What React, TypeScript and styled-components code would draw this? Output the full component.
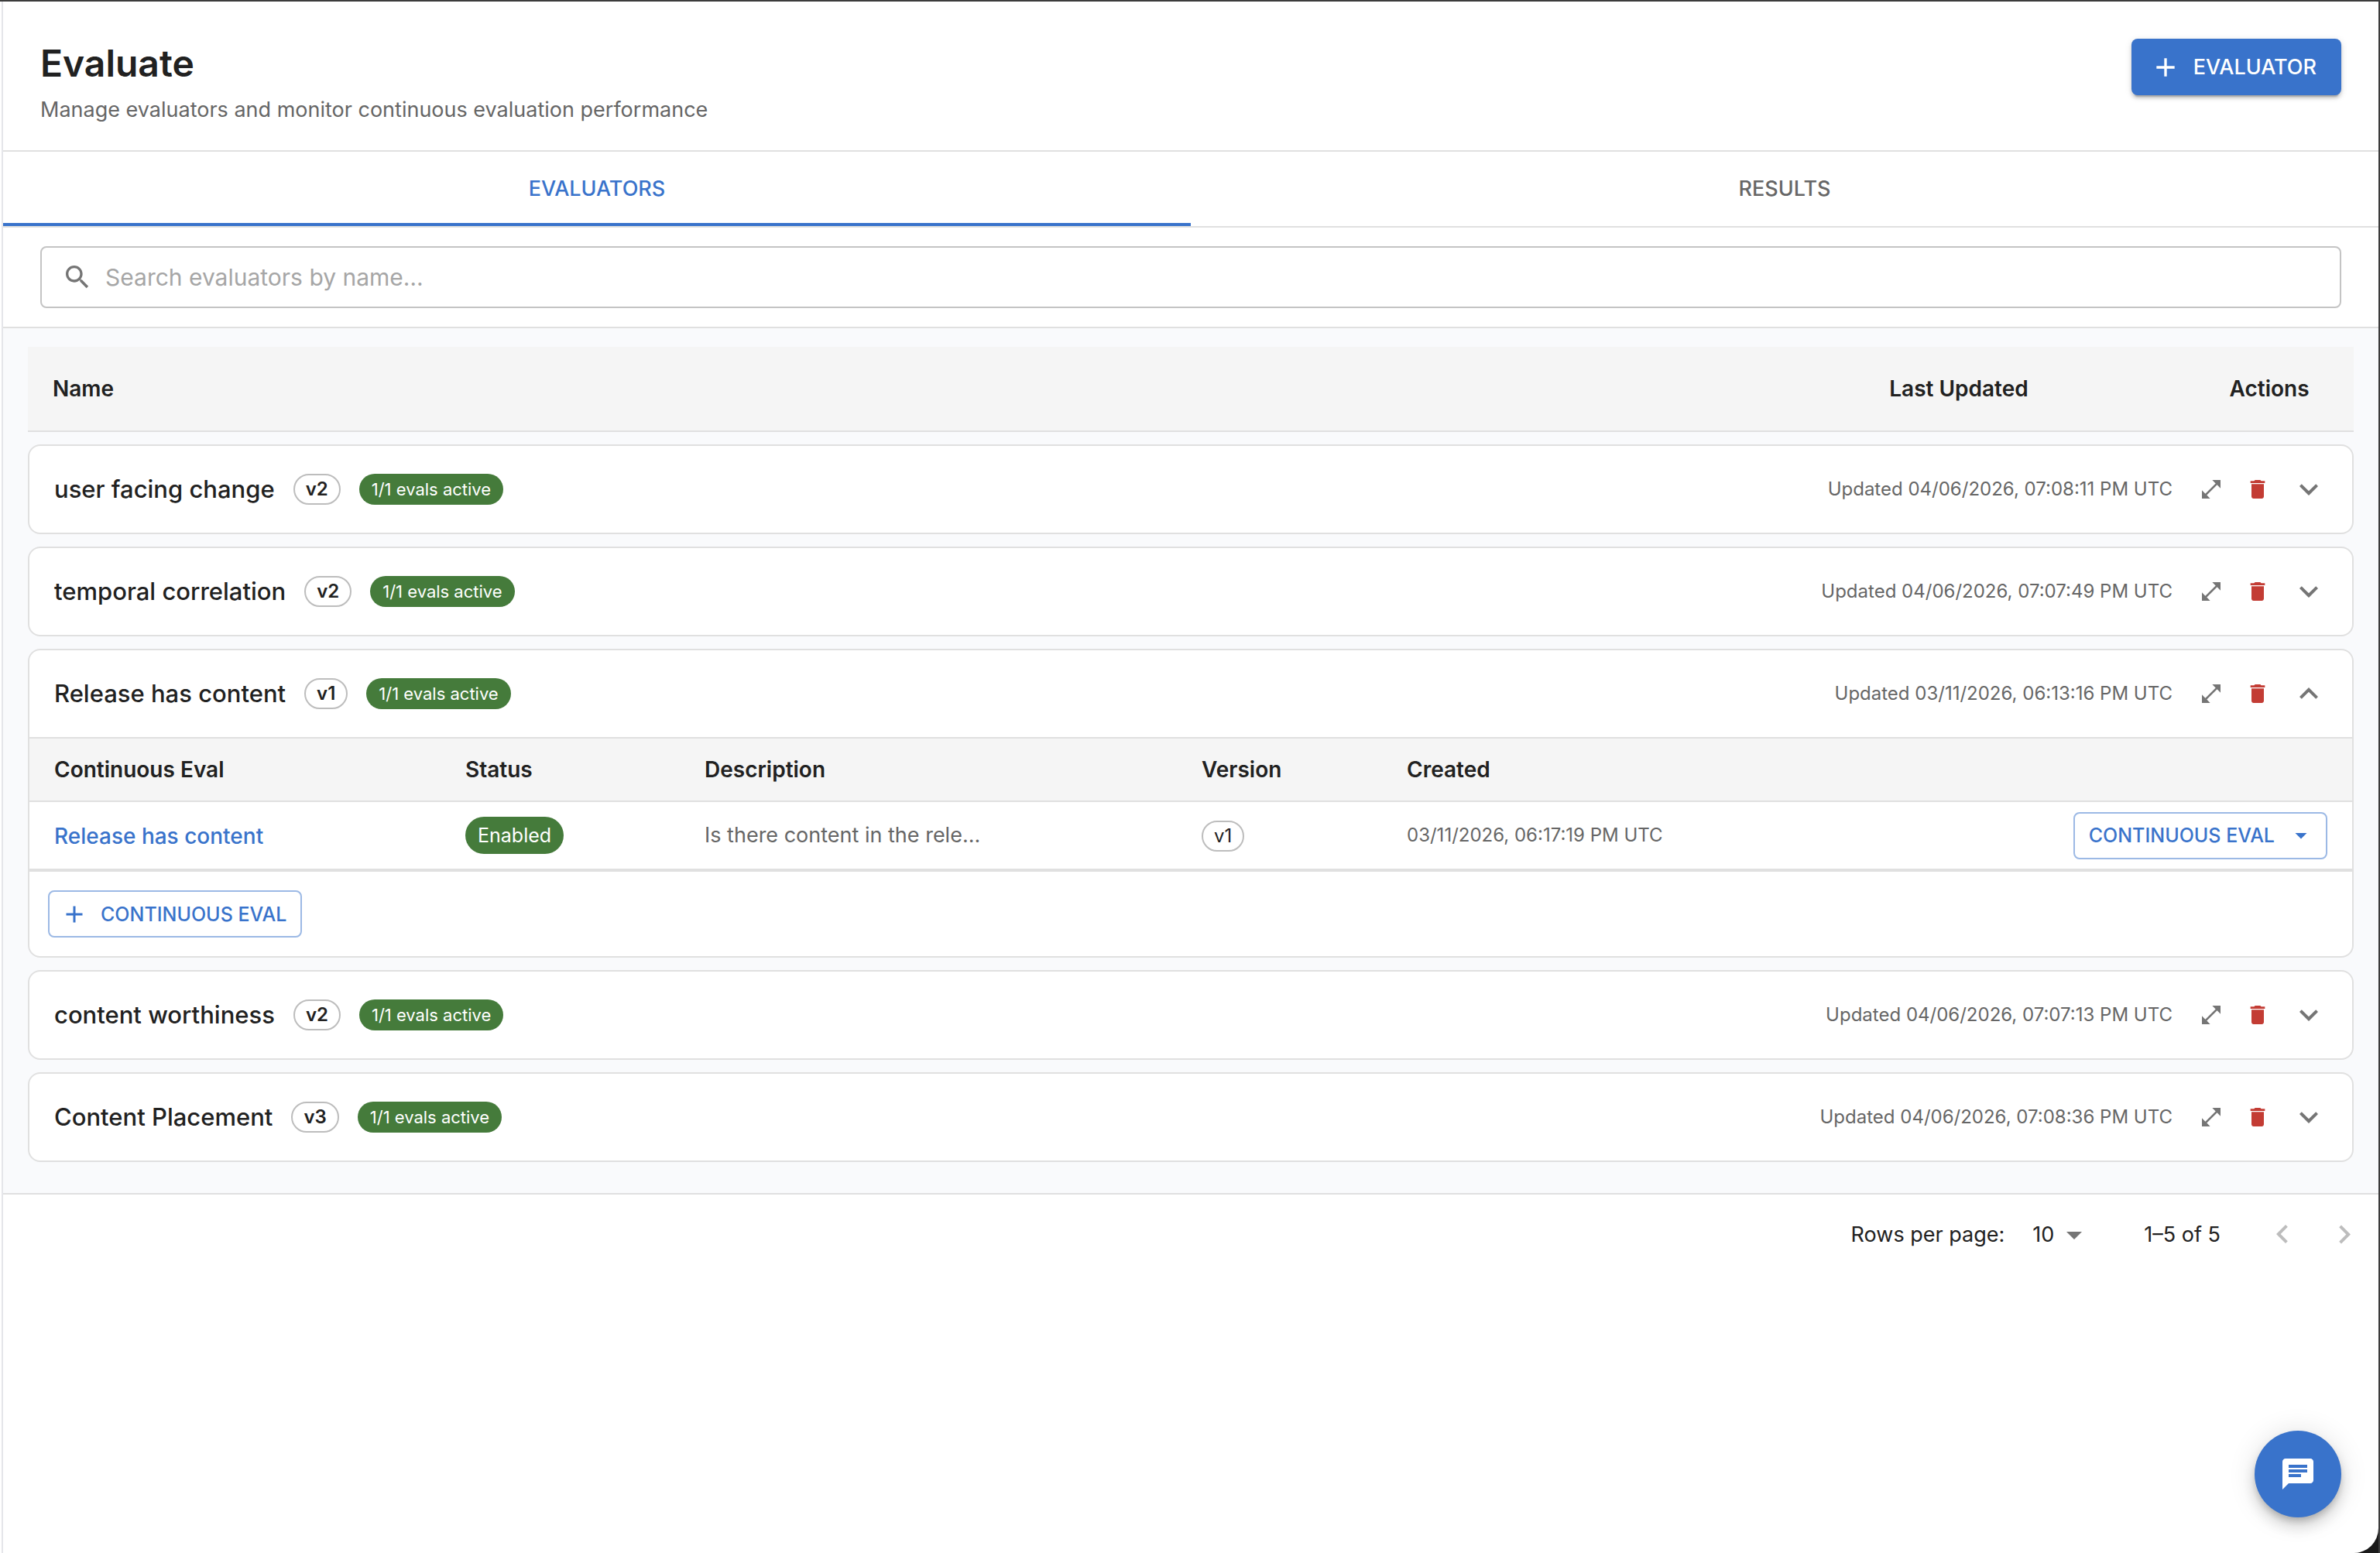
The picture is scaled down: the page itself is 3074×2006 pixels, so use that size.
import React, { useState } from "react";
import styled, { createGlobalStyle, css } from "styled-components";

const color = {
  primary: "#3973cb",
  primaryEdge: "#9cb9e5",
  success: "#457b3b",
  danger: "#c33c34",
  ink: "#212121",
  muted: "#666666",
  icon: "#757575",
  disabled: "#bdbdbd",
  line: "#e0e0e0",
  side: "#e5e6ea",
  canvas: "#f9fafc",
  head: "#f5f5f5",
  frame: "#3c3c3c",
  corner: "#1a1a1a",
};

const GlobalStyle = createGlobalStyle`
  *, *::before, *::after { box-sizing: border-box; }
  body {
    margin: 0;
    background: ${color.corner};
    color: ${color.ink};
    font-family: Inter, "Liberation Sans", sans-serif;
    font-size: 27px;
    line-height: 40px;
  }
  button, input, select { font: inherit; color: inherit; }
  button { cursor: pointer; }
`;

const Frame = styled.div`
  border-top: 2px solid ${color.frame};
  border-right: 2px solid ${color.frame};
`;

const Sheet = styled.div`
  padding-left: 2px;
  background: #fff;
  border-bottom-right-radius: 32px;
`;

const Page = styled.main`
  min-height: calc(100vh - 2px);
  border-left: 2px solid ${color.side};
`;

const Header = styled.header`
  display: flex;
  justify-content: space-between;
  align-items: flex-start;
  padding: 48px 48px 32px;
  border-bottom: 2px solid ${color.line};
`;

const Title = styled.h1`
  margin: 0 0 8px;
  font-size: 48px;
  line-height: 64px;
  font-weight: 600;
`;

const Subtitle = styled.p`
  margin: 0;
  color: ${color.muted};
`;

const Icon = styled.svg<{ $size: number }>`
  display: block;
  flex: none;
  width: ${(p) => p.$size}px;
  height: ${(p) => p.$size}px;
  fill: currentColor;
`;

const PrimaryButton = styled.button`
  display: flex;
  align-items: center;
  gap: 16px;
  height: 73px;
  padding: 0 32px 0 24px;
  border: 0;
  border-radius: 8px;
  background: ${color.primary};
  color: #fff;
  font-weight: 500;
  box-shadow: 0 6px 2px -4px rgba(0, 0, 0, 0.2), 0 4px 4px rgba(0, 0, 0, 0.14),
    0 2px 10px rgba(0, 0, 0, 0.12);
`;

const OutlineButton = styled.button<{ $iconEnd?: boolean }>`
  display: inline-flex;
  align-items: center;
  gap: 16px;
  height: 61px;
  padding: ${(p) => (p.$iconEnd ? "0 14px 0 18px" : "0 18px 0 14px")};
  border: 2px solid ${color.primaryEdge};
  border-radius: 8px;
  background: transparent;
  color: ${color.primary};
  font-size: 25px;
  font-weight: 500;
  white-space: nowrap;
`;

const Tabs = styled.div`
  display: flex;
  border-bottom: 2px solid ${color.line};
`;

const Tab = styled.button<{ $active: boolean }>`
  flex: 1;
  height: 96px;
  padding: 4px 0 0;
  border: 0;
  border-bottom: 4px solid ${(p) => (p.$active ? color.primary : "transparent")};
  background: transparent;
  color: ${(p) => (p.$active ? color.primary : color.muted)};
  font-weight: 500;
`;

const SearchBar = styled.div`
  padding: 24px 48px;
  border-bottom: 2px solid ${color.line};
`;

const SearchField = styled.label`
  display: flex;
  align-items: center;
  gap: 16px;
  height: 80px;
  padding: 0 26px;
  border: 2px solid #c4c4c4;
  border-radius: 8px;
  color: ${color.icon};
`;

const SearchInput = styled.input`
  flex: 1;
  min-width: 0;
  padding: 0;
  border: 0;
  outline: 0;
  background: transparent;
  color: ${color.ink};
  font-size: 30px;
  &::placeholder {
    color: #a6a6a6;
    opacity: 1;
  }
`;

const List = styled.section`
  display: flex;
  flex-direction: column;
  gap: 16px;
  padding: 24px 32px 40px;
  background: ${color.canvas};
  border-bottom: 2px solid ${color.line};
`;

const ListHead = styled.div`
  display: grid;
  grid-template-columns: 1fr 584px 218px;
  align-items: center;
  height: 110px;
  padding-left: 32px;
  background: ${color.head};
  border-bottom: 2px solid ${color.line};
  font-size: 28px;
  font-weight: 600;
`;

const HeadLabel = styled.span<{ $center?: boolean }>`
  text-align: ${(p) => (p.$center ? "center" : "left")};
`;

const Card = styled.article`
  overflow: hidden;
  background: #fff;
  border: 2px solid ${color.line};
  border-radius: 16px;
`;

const CardHead = styled.div`
  display: flex;
  align-items: center;
  gap: 24px;
  height: 112px;
  padding: 0 32px;
`;

const CardName = styled.h2`
  margin: 0;
  font-size: 31px;
  line-height: 48px;
  font-weight: 500;
`;

const Chip = styled.span<{ $kind: "outline" | "active" | "status"; $light?: boolean }>`
  display: inline-flex;
  align-items: center;
  height: ${(p) => (p.$kind === "status" ? 48 : 40)}px;
  border-radius: 24px;
  white-space: nowrap;
  ${(p) =>
    p.$kind === "outline"
      ? css`
          padding: 0 14px;
          border: 2px solid ${color.disabled};
          font-size: 24px;
          font-weight: ${p.$light ? 400 : 600};
        `
      : css`
          padding: 0 16px;
          background: ${color.success};
          color: #fff;
          font-size: ${p.$kind === "status" ? 25 : 22}px;
        `}
`;

const Updated = styled.span`
  margin-left: auto;
  color: ${color.muted};
  font-size: 24px;
`;

const Actions = styled.div`
  display: flex;
  align-items: center;
  gap: 8px;
`;

const IconButton = styled.button<{ $tone?: "danger" }>`
  display: flex;
  padding: 10px;
  border: 0;
  background: transparent;
  color: ${(p) => (p.$tone === "danger" ? color.danger : color.icon)};
`;

const ToggleButton = styled(IconButton)`
  margin-left: 8px;
  padding: 0;
`;

const PageButton = styled(IconButton)`
  padding: 16px;
  &:disabled {
    color: ${color.disabled};
    cursor: default;
  }
`;

const EvalTable = styled.table`
  width: 100%;
  table-layout: fixed;
  border-collapse: separate;
  border-spacing: 0;
  border-top: 2px solid ${color.line};
  border-bottom: 2px solid ${color.line};
`;

const Th = styled.th<{ $width?: number }>`
  width: ${(p) => (p.$width ? `${p.$width}px` : "auto")};
  height: 82px;
  padding: 0 32px;
  background: ${color.head};
  border-bottom: 2px solid ${color.line};
  text-align: left;
  font-size: 28px;
  font-weight: 600;
`;

const Td = styled.td<{ $muted?: boolean; $small?: boolean; $end?: boolean }>`
  height: 88px;
  padding: 0 32px;
  border-bottom: 2px solid ${color.line};
  color: ${(p) => (p.$muted ? color.muted : color.ink)};
  font-size: ${(p) => (p.$small ? 24 : 27)}px;
  text-align: ${(p) => (p.$end ? "right" : "left")};
  > * {
    vertical-align: middle;
  }
`;

const EvalLink = styled.a`
  color: ${color.primary};
  font-size: 28px;
  font-weight: 500;
  text-decoration: none;
`;

const CardFoot = styled.div`
  display: flex;
  padding: 24px;
`;

const Pager = styled.nav`
  display: flex;
  align-items: center;
  justify-content: flex-end;
  height: 104px;
  padding-right: 4px;
`;

const PageSize = styled.label`
  display: flex;
  align-items: center;
  gap: 36px;
`;

const SelectBox = styled.span`
  display: grid;
  align-items: center;
  justify-items: end;
  margin-right: 66px;
  > * {
    grid-area: 1 / 1;
  }
  > svg {
    color: ${color.icon};
    pointer-events: none;
  }
`;

const Select = styled.select`
  width: 78px;
  padding: 0;
  border: 0;
  background: transparent;
  appearance: none;
`;

const Range = styled.span`
  margin-right: 40px;
`;

const Fab = styled.button`
  position: fixed;
  right: 50px;
  bottom: 46px;
  display: flex;
  align-items: center;
  justify-content: center;
  width: 112px;
  height: 112px;
  border: 0;
  border-radius: 50%;
  background: ${color.primary};
  color: #fff;
  box-shadow: 0 6px 10px -2px rgba(0, 0, 0, 0.2), 0 12px 20px rgba(0, 0, 0, 0.14),
    0 2px 36px rgba(0, 0, 0, 0.12);
`;

const paths = {
  add: "M19 13h-6v6h-2v-6H5v-2h6V5h2v6h6v2z",
  search:
    "M15.5 14h-.79l-.28-.27C15.41 12.59 16 11.11 16 9.5 16 5.91 13.09 3 9.5 3S3 5.91 3 9.5 5.91 16 9.5 16c1.61 0 3.09-.59 4.23-1.57l.27.28v.79l5 4.99L20.49 19l-4.99-5zm-6 0C7.01 14 5 11.99 5 9.5S7.01 5 9.5 5 14 7.01 14 9.5 11.99 14 9.5 14z",
  open: "M21 11V3h-8l3.29 3.29-10 10L3 13v8h8l-3.29-3.29 10-10z",
  trash: "M6 19c0 1.1.9 2 2 2h8c1.1 0 2-.9 2-2V7H6v12zM19 4h-3.5l-1-1h-5l-1 1H5v2h14V4z",
  down: "M16.59 8.59 12 13.17 7.41 8.59 6 10l6 6 6-6z",
  up: "m12 8-6 6 1.41 1.41L12 10.83l4.59 4.58L18 14z",
  caret: "m7 10 5 5 5-5z",
  left: "M15.41 16.09l-4.58-4.59 4.58-4.59L14 5.5l-6 6 6 6z",
  right: "M8.59 16.34l4.58-4.59-4.58-4.59L10 5.75l6 6-6 6z",
  chat: "M20 2H4c-1.1 0-1.99.9-1.99 2L2 22l4-4h14c1.1 0 2-.9 2-2V4c0-1.1-.9-2-2-2zM6 9h12v2H6V9zm8 5H6v-2h8v2zm4-6H6V6h12v2z",
};

function Glyph({ name, size }: { name: keyof typeof paths; size: number }) {
  return (
    <Icon $size={size} viewBox="0 0 24 24" aria-hidden="true">
      <path d={paths[name]} />
    </Icon>
  );
}

type ContinuousEval = {
  name: string;
  status: string;
  description: string;
  version: string;
  created: string;
};

type Evaluator = {
  name: string;
  version: string;
  updated: string;
  evals?: ContinuousEval[];
};

const evaluators: Evaluator[] = [
  { name: "user facing change", version: "v2", updated: "04/06/2026, 07:08:11 PM UTC" },
  { name: "temporal correlation", version: "v2", updated: "04/06/2026, 07:07:49 PM UTC" },
  {
    name: "Release has content",
    version: "v1",
    updated: "03/11/2026, 06:13:16 PM UTC",
    evals: [
      {
        name: "Release has content",
        status: "Enabled",
        description: "Is there content in the rele...",
        version: "v1",
        created: "03/11/2026, 06:17:19 PM UTC",
      },
    ],
  },
  { name: "content worthiness", version: "v2", updated: "04/06/2026, 07:07:13 PM UTC" },
  { name: "Content Placement", version: "v3", updated: "04/06/2026, 07:08:36 PM UTC" },
];

function EvalRows({ rows }: { rows: ContinuousEval[] }) {
  return (
    <>
      <EvalTable>
        <thead>
          <tr>
            <Th $width={531}>Continuous Eval</Th>
            <Th $width={309}>Status</Th>
            <Th $width={642}>Description</Th>
            <Th $width={265}>Version</Th>
            <Th>Created</Th>
            <Th $width={400} aria-label="Actions" />
          </tr>
        </thead>
        <tbody>
          {rows.map((row) => (
            <tr key={row.name}>
              <Td>
                <EvalLink href="#eval">{row.name}</EvalLink>
              </Td>
              <Td>
                <Chip $kind="status">{row.status}</Chip>
              </Td>
              <Td $muted>{row.description}</Td>
              <Td>
                <Chip $kind="outline" $light>
                  {row.version}
                </Chip>
              </Td>
              <Td $muted $small>
                {row.created}
              </Td>
              <Td $end>
                <OutlineButton type="button" $iconEnd>
                  CONTINUOUS EVAL
                  <Glyph name="caret" size={36} />
                </OutlineButton>
              </Td>
            </tr>
          ))}
        </tbody>
      </EvalTable>
      <CardFoot>
        <OutlineButton type="button">
          <Glyph name="add" size={36} />
          CONTINUOUS EVAL
        </OutlineButton>
      </CardFoot>
    </>
  );
}

function EvaluatorCard({ item }: { item: Evaluator }) {
  const [open, setOpen] = useState(Boolean(item.evals));
  return (
    <Card>
      <CardHead>
        <CardName>{item.name}</CardName>
        <Chip $kind="outline">{item.version}</Chip>
        <Chip $kind="active">1/1 evals active</Chip>
        <Updated>Updated {item.updated}</Updated>
        <Actions>
          <IconButton type="button" aria-label="Open">
            <Glyph name="open" size={32} />
          </IconButton>
          <IconButton type="button" $tone="danger" aria-label="Delete">
            <Glyph name="trash" size={32} />
          </IconButton>
          <ToggleButton
            type="button"
            aria-expanded={open}
            aria-label="Toggle"
            onClick={() => setOpen(!open)}
          >
            <Glyph name={open ? "up" : "down"} size={48} />
          </ToggleButton>
        </Actions>
      </CardHead>
      {open && item.evals && <EvalRows rows={item.evals} />}
    </Card>
  );
}

export default function App() {
  const [tab, setTab] = useState("EVALUATORS");
  return (
    <Frame>
      <GlobalStyle />
      <Sheet>
        <Page>
          <Header>
            <div>
              <Title>Evaluate</Title>
              <Subtitle>Manage evaluators and monitor continuous evaluation performance</Subtitle>
            </div>
            <PrimaryButton type="button">
              <Glyph name="add" size={40} />
              EVALUATOR
            </PrimaryButton>
          </Header>
          <Tabs role="tablist">
            {["EVALUATORS", "RESULTS"].map((label) => (
              <Tab
                key={label}
                type="button"
                role="tab"
                aria-selected={tab === label}
                $active={tab === label}
                onClick={() => setTab(label)}
              >
                {label}
              </Tab>
            ))}
          </Tabs>
          <SearchBar>
            <SearchField>
              <Glyph name="search" size={40} />
              <SearchInput aria-label="Search evaluators" placeholder="Search evaluators by name…" />
            </SearchField>
          </SearchBar>
          <List>
            <ListHead>
              <HeadLabel>Name</HeadLabel>
              <HeadLabel $center>Last Updated</HeadLabel>
              <HeadLabel $center>Actions</HeadLabel>
            </ListHead>
            {evaluators.map((item) => (
              <EvaluatorCard key={item.name} item={item} />
            ))}
          </List>
          <Pager aria-label="Pagination">
            <PageSize>
              Rows per page:
              <SelectBox>
                <Select defaultValue="10">
                  <option>10</option>
                  <option>25</option>
                  <option>50</option>
                </Select>
                <Glyph name="caret" size={48} />
              </SelectBox>
            </PageSize>
            <Range>1–5 of 5</Range>
            <PageButton type="button" disabled aria-label="Previous page">
              <Glyph name="left" size={48} />
            </PageButton>
            <PageButton type="button" disabled aria-label="Next page">
              <Glyph name="right" size={48} />
            </PageButton>
          </Pager>
        </Page>
      </Sheet>
      <Fab type="button" aria-label="Open chat">
        <Glyph name="chat" size={48} />
      </Fab>
    </Frame>
  );
}
